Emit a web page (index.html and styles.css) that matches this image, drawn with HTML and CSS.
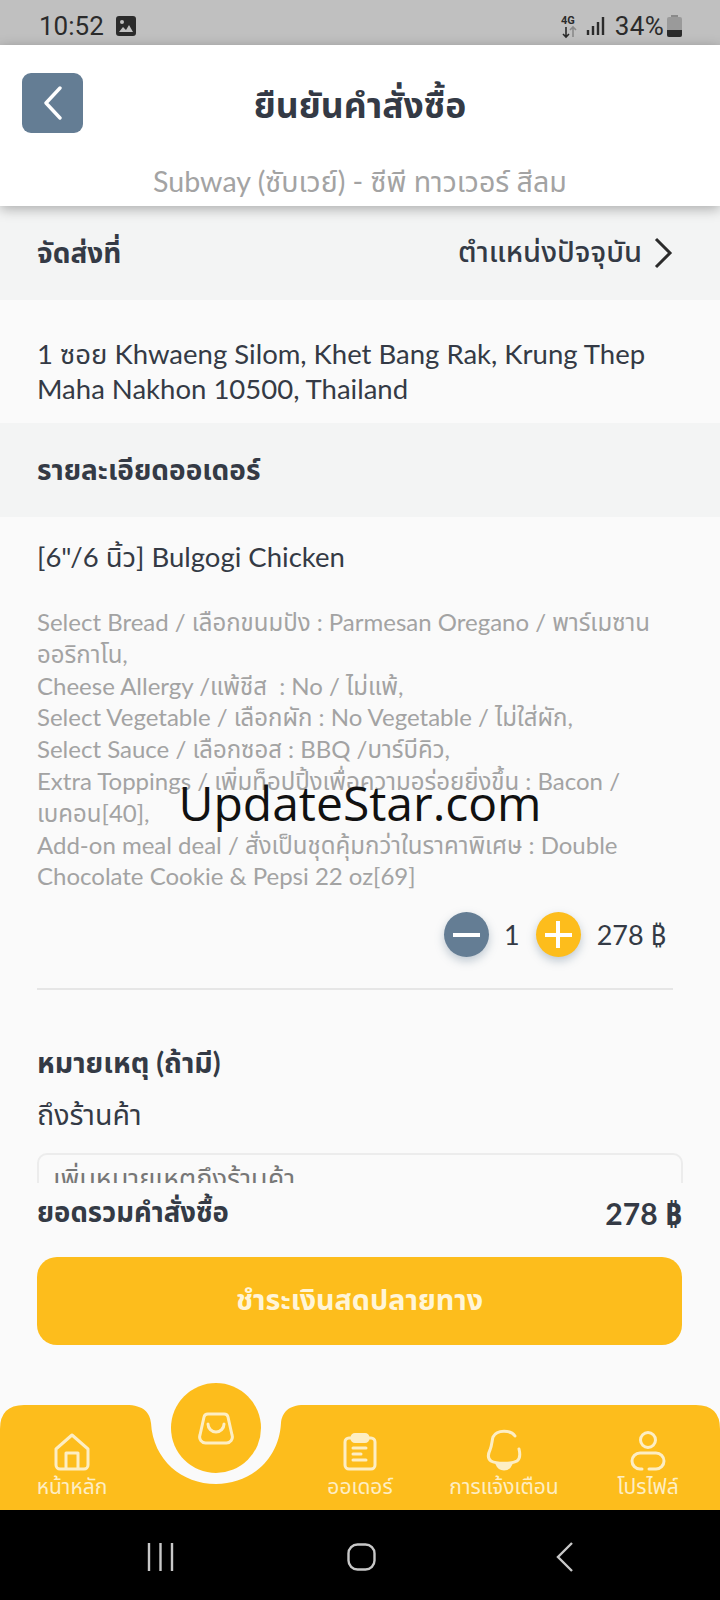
FILE: index.html
```html
<!DOCTYPE html>
<html lang="th">
<head>
	<meta charset="UTF-8" />
	<title>ยืนยันคำสั่งซื้อ</title>
	<link rel="stylesheet" href="styles.css">
</head>
<body>
	<div class="screen">
		<!-- status bar -->
		<div class="status">
			<span class="status-time">10:52</span>
			<svg class="status-pic" width="22" height="22" viewBox="0 0 22 22"><rect x="1" y="1" width="20" height="20" rx="3" fill="#2b2b2b"/><circle cx="7" cy="7" r="2" fill="#c0c0c0"/><path d="M4 17l4-5 3 3 3-5 4 7z" fill="#c0c0c0"/></svg>
			<span class="status-gap"></span>
			<svg width="20" height="26" viewBox="0 0 20 26"><text x="1" y="11" class="status-4g">4G</text><path d="M6 14v10M3 21l3 3 3-3" fill="none" stroke="#2b2b2b" stroke-width="1.6"/><path d="M13 24V14M10 17l3-3 3 3" fill="none" stroke="#8a8a8a" stroke-width="1.6"/></svg>
			<svg class="status-signal" width="19" height="18" viewBox="0 0 19 18"><path d="M2 13v5M7 9v9M12 5v13M17 0v18" stroke="#2b2b2b" stroke-width="2.4" fill="none"/></svg>
			<span class="status-pct">34%</span>
			<svg width="15" height="22" viewBox="0 0 15 22"><rect x="4" y="0" width="7" height="2" fill="#8a8a8a"/><rect x="0" y="2" width="15" height="20" rx="2" fill="#9a9a9a"/><path d="M0 15h15v5a2 2 0 0 1-2 2H2a2 2 0 0 1-2-2z" fill="#2b2b2b"/></svg>
		</div>

		<!-- header -->
		<div class="header">
			<div class="header-top">
				<div class="back-btn">
					<svg width="20" height="34" viewBox="0 0 20 34"><path d="M17 2L3 17l14 15" fill="none" stroke="#fff" stroke-width="3.4" stroke-linecap="round" stroke-linejoin="round"/></svg>
				</div>
				<h1 class="title">ยืนยันคำสั่งซื้อ</h1>
			</div>
			<div class="subtitle">Subway (ซับเวย์) - ซีพี ทาวเวอร์ สีลม</div>
		</div>

		<!-- scrolling part -->
		<div class="content">
			<div class="section-row">
				<span class="section-title">จัดส่งที่</span>
				<span class="location">ตำแหน่งปัจจุบัน
					<svg width="20" height="32" viewBox="0 0 20 32"><path d="M3 2l14 14L3 30" fill="none" stroke="#2b2b2b" stroke-width="3"/></svg>
				</span>
			</div>
			<p class="address">1 ซอย Khwaeng Silom, Khet Bang Rak, Krung Thep Maha Nakhon 10500, Thailand</p>
			<div class="section-row">
				<span class="section-title">รายละเอียดออเดอร์</span>
			</div>
			<div class="order">
				<div class="item-name">[6"/6 นิ้ว] Bulgogi Chicken</div>
				<p class="item-detail">Select Bread / เลือกขนมปัง : Parmesan Oregano / พาร์เมซาน<br>ออริกาโน,<br>Cheese Allergy /แพ้ชีส &nbsp;: No / ไม่แพ้,<br>Select Vegetable / เลือกผัก : No Vegetable / ไม่ใส่ผัก,<br>Select Sauce / เลือกซอส : BBQ /บาร์บีคิว,<br>Extra Toppings / เพิ่มท็อปปิ้งเพื่อความอร่อยยิ่งขึ้น : Bacon /<br>เบคอน[40],<br>Add-on meal deal / สั่งเป็นชุดคุ้มกว่าในราคาพิเศษ : Double<br>Chocolate Cookie &amp; Pepsi 22 oz[69]</p>
				<div class="qty-row">
					<span class="qty-btn minus"><i class="bar"></i></span>
					<span class="qty">1</span>
					<span class="qty-btn plus"><i class="bar"></i><i class="bar upright"></i></span>
					<span class="price">278 ₿</span>
				</div>
			</div>
			<div class="remark">
				<div class="remark-title">หมายเหตุ (ถ้ามี)</div>
				<div class="remark-sub">ถึงร้านค้า</div>
				<div class="remark-box">เพิ่มหมายเหตุถึงร้านค้า</div>
			</div>
		</div>

		<!-- total and pay -->
		<div class="summary">
			<div class="total-row">
				<span>ยอดรวมคำสั่งซื้อ</span>
				<span class="total-price">278 ₿</span>
			</div>
			<div class="pay-btn">ชำระเงินสดปลายทาง</div>
		</div>

		<!-- bottom tabs -->
		<div class="tabs">
			<svg class="tabs-bg" width="720" height="105" viewBox="0 0 720 105"><path d="M0 105V24Q0 0 24 0H126C144 0 150 8 151 18C153 55 182 79 216 79C250 79 279 55 281 18C282 8 288 0 304 0H696Q720 0 720 24V105Z" fill="#fdbd1c"/></svg>
			<div class="tab">
				<svg width="36" height="38" viewBox="0 0 36 38" class="tab-icon"><path d="M2 16L18 2l16 14v16a4 4 0 0 1-4 4H6a4 4 0 0 1-4-4z M12 36V20h12v16" /></svg>
				<span>หน้าหลัก</span>
			</div>
			<div class="tab tab-center">
				<div class="basket">
					<svg width="36" height="33" viewBox="0 0 36 33" class="tab-icon"><path d="M10 2h16a4 4 0 0 1 4 3l4 18a6 6 0 0 1-6 8H8a6 6 0 0 1-6-8L6 5a4 4 0 0 1 4-3z M10 12a8 8 0 0 0 16 0" /></svg>
				</div>
			</div>
			<div class="tab">
				<svg width="34" height="38" viewBox="0 0 34 38" class="tab-icon"><rect x="2" y="5" width="30" height="31" rx="4"/><rect x="9" y="1.500" width="16" height="7" rx="3" class="solid"/><path d="M10 15h13M10 21h8M10 27h13"/></svg>
				<span>ออเดอร์</span>
			</div>
			<div class="tab">
				<svg width="36" height="42" viewBox="0 0 36 42" class="tab-icon"><path d="M29 7C25 1 11 0 7 8C6 11 6 16 4 21C2 25 1 29 5 32C10 35 26 35 31 32C35 29 34 24 33 20" /><path d="M11 35q7 2 14 0q-2 5-7 5t-7-5z" class="solid"/></svg>
				<span>การแจ้งเตือน</span>
			</div>
			<div class="tab">
				<svg width="36" height="40" viewBox="0 0 36 40" class="tab-icon"><circle cx="18" cy="9" r="7.500"/><path d="M12 38H10a8 8 0 0 1 0-16H26a8 8 0 0 1 0 16H19"/></svg>
				<span>โปรไฟล์</span>
			</div>
		</div>

		<!-- android buttons -->
		<div class="sys-nav">
			<svg width="27" height="28" viewBox="0 0 27 28"><path d="M2 0v28M13.500 0v28M25 0v28" stroke="#c8c8c8" stroke-width="2.400" fill="none"/></svg>
			<svg class="sys-home" width="29" height="28" viewBox="0 0 29 28"><rect x="1.500" y="1.500" width="26" height="25" rx="9" fill="none" stroke="#c8c8c8" stroke-width="2.400"/></svg>
			<svg class="sys-back" width="18" height="30" viewBox="0 0 18 30"><path d="M16 1L2 15l14 14" stroke="#c8c8c8" stroke-width="2.400" fill="none"/></svg>
		</div>

		<div class="watermark">UpdateStar.com</div>
	</div>
</body>
</html>
```

FILE: styles.css
```css
html,
body {
	margin: 0;
	padding: 0;
	background: #000;
}

* {
	box-sizing: border-box;
}

.screen {
	width: 720px;
	height: 1600px;
	display: flex;
	flex-direction: column;
	position: relative;
	overflow: hidden;
	background: #fafafa;
	font-family: "Lato", "Noto Sans", "Noto Sans Thai", "Liberation Sans", sans-serif;
	color: #343a45;
}

/* status bar */
.status {
	height: 45px;
	flex: none;
	display: flex;
	align-items: center;
	padding: 7px 38px 0 39px;
	background: #c0c0c0;
	color: #2b2b2b;
	font-family: "Roboto", sans-serif;
	font-size: 26px;
}

.status-pic {
	margin-left: 11px;
}

.status-gap {
	flex: 1;
}

.status-4g {
	font-size: 11px;
	font-weight: 700;
	fill: #2b2b2b;
}

.status-signal {
	margin-left: 6px;
}

.status-pct {
	margin: 0 3px 0 10px;
	letter-spacing: .3px;
}

/* header */
.header {
	height: 161px;
	flex: none;
	background: #fff;
	box-shadow: 0 3px 12px rgba(0, 0, 0, .3);
	position: relative;
	z-index: 2;
}

.header-top {
	height: 116px;
	display: flex;
	align-items: flex-start;
	padding: 28px 22px 0;
}

.back-btn {
	width: 61px;
	height: 60px;
	flex: none;
	display: flex;
	align-items: center;
	justify-content: center;
	border-radius: 9px;
	background: #647d94;
}

.title {
	flex: 1;
	margin: 7px 61px 0 0;
	text-align: center;
	font-size: 35.500px;
	font-weight: 700;
	line-height: 50px;
}

.subtitle {
	text-align: center;
	font-size: 28.600px;
	line-height: 40px;
	color: #a3a3a3;
}

/* content */
.content {
	flex: 1;
	min-height: 0;
	overflow: hidden;
}

.section-row {
	height: 94px;
	display: flex;
	align-items: center;
	justify-content: space-between;
	padding: 0 47px 0 37px;
	background: #f3f4f4;
}

.section-title {
	padding-top: 3px;
	font-size: 28px;
	font-weight: 700;
}

.location {
	display: flex;
	align-items: center;
	gap: 11px;
	font-size: 29px;
	font-weight: 500;
}

.address {
	height: 123px;
	margin: 0;
	padding: 36px 37px 0;
	font-size: 27.500px;
	line-height: 35px;
}

.order {
	margin: 0 47px 0 37px;
	padding-top: 20px;
	border-bottom: 2px solid #e6e6e6;
	height: 473px;
}

.item-name {
	font-size: 27.500px;
	line-height: 40px;
}

.item-detail {
	margin: 29px 0 0;
	font-size: 24px;
	line-height: 31.800px;
	color: #a3a3a3;
}

.qty-row {
	display: flex;
	align-items: center;
	justify-content: flex-end;
	margin-top: 20px;
	font-size: 27px;
}

.qty-btn {
	width: 45px;
	height: 45px;
	border-radius: 50%;
	display: flex;
	align-items: center;
	justify-content: center;
	position: relative;
	box-shadow: 0 4px 10px rgba(100, 125, 148, .4);
}

.minus {
	background: #647d94;
}

.plus {
	background: #fdbd1c;
}

.bar {
	width: 27px;
	height: 4px;
	background: #fff;
}

.upright {
	position: absolute;
	width: 4px;
	height: 27px;
}

.qty {
	margin: 0 16px 0 15px;
}

.price {
	margin: 0 7px 0 16px;
}

.remark {
	padding: 50px 37px 0;
}

.remark-title {
	font-size: 28.500px;
	font-weight: 700;
	line-height: 44px;
}

.remark-sub {
	margin-top: 8px;
	font-size: 28.500px;
	line-height: 44px;
}

.remark-box {
	margin-top: 17px;
	height: 70px;
	padding: 4px 14px;
	border: 2px solid #ececec;
	border-radius: 10px;
	font-size: 27px;
	color: #777;
}

/* total + pay */
.summary {
	height: 222px;
	flex: none;
	padding: 8px 38px 0 37px;
}

.total-row {
	display: flex;
	justify-content: space-between;
	align-items: center;
	height: 44px;
	font-size: 27.500px;
	font-weight: 700;
}

.total-price {
	font-size: 30px;
}

.pay-btn {
	height: 88px;
	margin-top: 22px;
	display: flex;
	align-items: center;
	justify-content: center;
	border-radius: 20px;
	background: #fdbd1c;
	color: #fff5d8;
	font-size: 28.700px;
	font-weight: 700;
}

/* tabs */
.tabs {
	height: 105px;
	flex: none;
	position: relative;
	display: grid;
	grid-template-columns: repeat(5, 144px);
}

.tabs-bg {
	position: absolute;
	top: 0;
	left: 0;
}

.tab {
	position: relative;
	display: flex;
	flex-direction: column;
	align-items: center;
	justify-content: flex-end;
	padding-bottom: 9px;
	color: #fdeec4;
	font-size: 21px;
	line-height: 30px;
}

.tab-icon {
	fill: none;
	stroke: #fdeec4;
	stroke-width: 3;
	stroke-linecap: round;
	stroke-linejoin: round;
}

.tab-icon .solid {
	fill: #fdeec4;
}

.basket {
	position: absolute;
	top: -22px;
	left: 27px;
	width: 90px;
	height: 90px;
	display: flex;
	align-items: center;
	justify-content: center;
	border-radius: 50%;
	background: #fdbd1c;
}

/* android nav */
.sys-nav {
	height: 90px;
	flex: none;
	display: flex;
	align-items: center;
	padding: 4px 0 0 147px;
	background: #000;
}

.sys-home {
	margin-left: 173px;
}

.sys-back {
	margin-left: 180px;
}

.watermark {
	position: absolute;
	top: 770px;
	left: 0;
	width: 720px;
	text-align: center;
	font-family: "Open Sans", sans-serif;
	font-size: 48px;
	color: #111;
}
```
